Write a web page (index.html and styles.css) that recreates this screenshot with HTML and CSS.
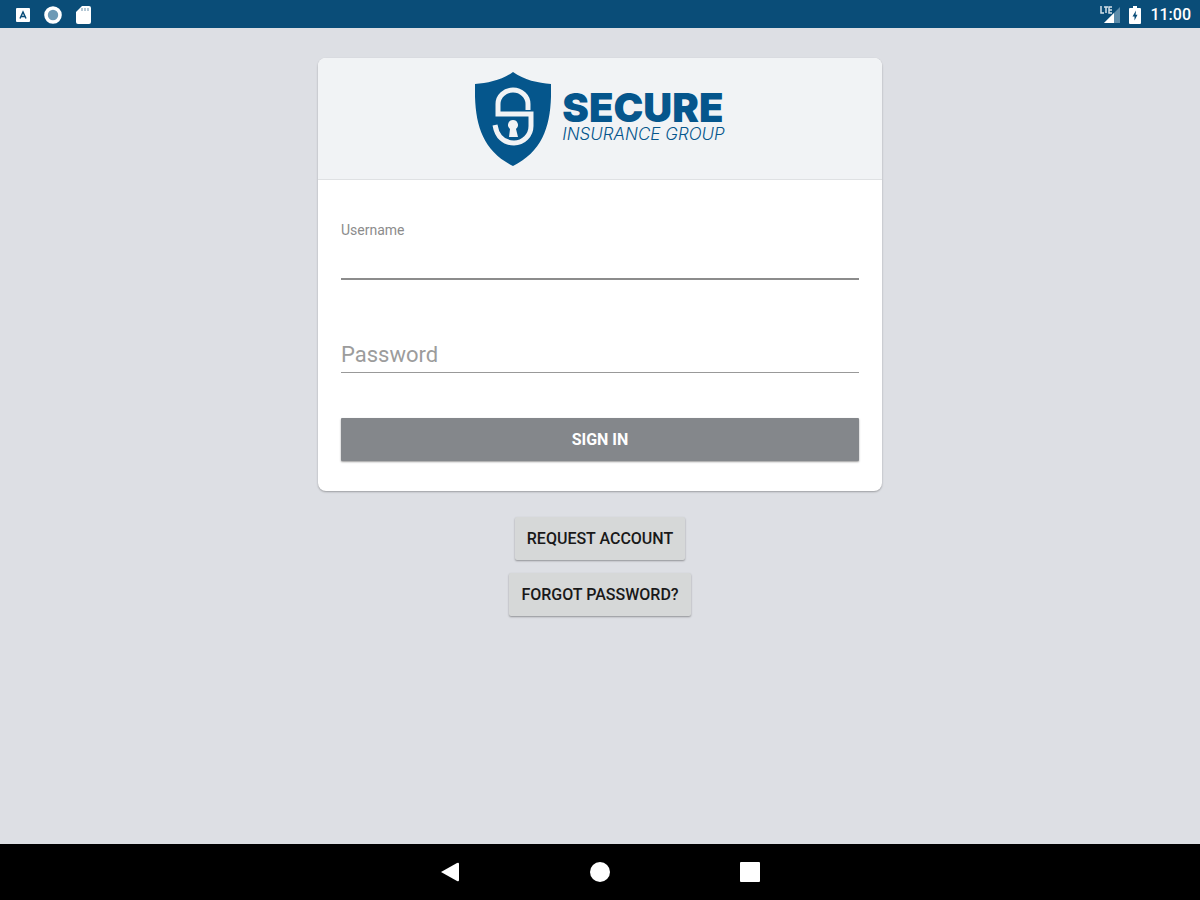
FILE: index.html
```
<!DOCTYPE html>
<html lang="en">
<head>
  <meta charset="UTF-8">
  <meta name="viewport" content="width=device-width, initial-scale=1.0">
  <title>Secure Insurance Group</title>
  <link rel="stylesheet" href="styles.css">
</head>
<body>
  <header class="status-bar">
    <div class="status-icons">
      <svg width="14" height="14" viewBox="0 0 14 14">
        <rect width="14" height="14" rx="1" fill="#fff"/>
        <path d="M4 10.500 L7 4 L10 10.500 M5 8.500 H9" fill="none" stroke="#0a4d78" stroke-width="1.500"/>
      </svg>
      <svg width="18" height="18" viewBox="0 0 18 18">
        <circle cx="9" cy="9" r="7" fill="#6e9ab5" stroke="#fff" stroke-width="3.600"/>
      </svg>
      <svg width="16" height="18" viewBox="0 0 16 18">
        <path d="M6 0 H13 Q15 0 15 2 V16 Q15 18 13 18 H2 Q0 18 0 16 V6 Z" fill="#fff"/>
        <path d="M6 2 V5 M9 2 V5 M12 2 V5" stroke="#b5c8d5" stroke-width="2"/>
      </svg>
    </div>
    <div class="status-right">
      <svg width="20" height="18" viewBox="0 0 20 18">
        <path d="M20 1 V17 H4 Z" fill="#5d8caa"/>
        <path d="M14 7 V17 H4 Z" fill="#fff"/>
        <path d="M1 0 V7 H4 M4 1 H8 M6 1 V7 M12 1 H9 V7 H12 M9 4 H12" fill="none" stroke="#d5e1e9" stroke-width="1.500"/>
      </svg>
      <svg width="12" height="18" viewBox="0 0 12 18">
        <path d="M4 0 H8 V2 H11 Q12 2 12 3 V17 Q12 18 11 18 H1 Q0 18 0 17 V3 Q0 2 1 2 H4 Z" fill="#fff"/>
        <path d="M7 4.500 L3.500 10.500 H5.500 V14.500 L8.500 8.800 H6.600 Z" fill="#0a4d78"/>
      </svg>
      <span class="clock">11:00</span>
    </div>
  </header>

  <main>
    <form class="card">
      <div class="brand">
        <svg width="76" height="94" viewBox="0 0 76 94">
          <path d="M38 0 C27 8 13 11 0 12 C-1 50 6 78 38 94 C70 78 77 50 76 12 C63 11 49 8 38 0 Z" fill="#05568c"/>
          <path d="M53 38 V32 A15 14 0 0 0 23 32 V42 H56 V54 A17 17 0 0 1 39 71 C29 71 22 65 20 53" fill="none" stroke="#f1f3f5" stroke-width="5"/>
          <path d="M38 48 A5 5 0 0 1 41 57 L43 65 H34 L35 57 A5 5 0 0 1 38 48 Z" fill="#f1f3f5"/>
        </svg>
        <div class="brand-text">
          <span class="brand-name">SECURE</span>
          <span class="brand-sub">INSURANCE GROUP</span>
        </div>
      </div>
      <div class="fields">
        <div class="field active">
          <label for="username">Username</label>
          <input type="text" id="username">
        </div>
        <div class="field">
          <input type="password" id="password" placeholder="Password" aria-label="Password">
        </div>
        <button type="submit" class="sign-in">SIGN IN</button>
      </div>
    </form>
    <div class="links">
      <button type="button">REQUEST ACCOUNT</button>
      <button type="button">FORGOT PASSWORD?</button>
    </div>
  </main>

  <nav class="nav-bar">
    <button type="button" aria-label="Back">
      <svg width="20" height="20" viewBox="0 0 20 20"><path d="M1 10 L17 1 Q19 0 19 2 V18 Q19 20 17 19 Z" fill="#fff"/></svg>
    </button>
    <button type="button" aria-label="Home">
      <svg width="20" height="20" viewBox="0 0 20 20"><circle cx="10" cy="10" r="10" fill="#fff"/></svg>
    </button>
    <button type="button" aria-label="Recent apps">
      <svg width="20" height="20" viewBox="0 0 20 20"><rect width="20" height="20" rx="1" fill="#fff"/></svg>
    </button>
  </nav>
</body>
</html>
```
FILE: styles.css
```
* {
  box-sizing: border-box;
}

body {
  margin: 0;
  min-height: 100vh;
  display: flex;
  flex-direction: column;
  background-color: #dddfe4;
  font-family: Roboto, sans-serif;
}

button, input {
  font-family: inherit;
  border: none;
}

button {
  cursor: pointer;
}

svg {
  display: block;
}

.status-bar {
  display: flex;
  justify-content: space-between;
  align-items: center;
  height: 28px;
  padding: 2px 9px 0 16px;
  background-color: #0a4d78;
}

.status-icons {
  display: flex;
  align-items: center;
  gap: 14px;
}

.status-right {
  display: flex;
  align-items: center;
  gap: 9px;
}

.clock {
  color: #fff;
  font-size: 16px;
  font-weight: 500;
  line-height: 20px;
}

main {
  flex: 1;
  padding-top: 30px;
}

.card {
  width: 47%;
  min-width: 320px;
  margin: 0 auto;
  background-color: #fff;
  border-radius: 8px;
  box-shadow: 0 1px 2px rgba(0, 0, 0, 0.3);
  overflow: hidden;
}

.brand {
  display: flex;
  justify-content: center;
  gap: 11px;
  padding: 14px 0 13px;
  background-color: #f1f3f5;
  border-bottom: 1px solid #dfe1e3;
}

.brand-text {
  display: flex;
  flex-direction: column;
  padding-top: 20px;
  font-family: Inter, sans-serif;
  color: #05568c;
}

.brand-name {
  font-size: 40px;
  font-weight: 900;
  line-height: 32px;
}

.brand-sub {
  font-size: 17px;
  font-style: italic;
  font-weight: 300;
  line-height: 20px;
}

.fields {
  display: flex;
  flex-direction: column;
  padding: 40px 23px 30px;
}

.field {
  display: flex;
  flex-direction: column;
  margin-bottom: 45px;
}

.field.active {
  margin-bottom: 57px;
}

.field label {
  color: #8c8c8c;
  font-size: 14px;
  line-height: 20px;
}

.field input {
  height: 36px;
  padding: 0;
  border-bottom: 1px solid #999;
  border-radius: 0;
  background: none;
  color: #333;
  font-size: 22px;
  outline: none;
}

.field.active input {
  height: 40px;
  border-bottom: 2px solid #8c8c8c;
}

.field input::placeholder {
  color: #9c9c9c;
}

.sign-in {
  height: 43px;
  border-radius: 1px;
  background-color: #84878b;
  box-shadow: 0 1px 2px rgba(0, 0, 0, 0.4);
  color: #fff;
  font-size: 16px;
  font-weight: 700;
}

.links {
  display: flex;
  flex-direction: column;
  align-items: center;
  gap: 13px;
  padding-top: 26px;
}

.links button {
  height: 43px;
  padding: 0 12px;
  border-radius: 2px;
  background-color: #d6d8d8;
  box-shadow: 0 1px 2px rgba(0, 0, 0, 0.35);
  color: #191919;
  font-size: 16px;
  font-weight: 500;
}

.nav-bar {
  display: flex;
  justify-content: center;
  align-items: center;
  gap: 130px;
  height: 56px;
  background-color: #000;
}

.nav-bar button {
  padding: 0;
  background: none;
}
```
